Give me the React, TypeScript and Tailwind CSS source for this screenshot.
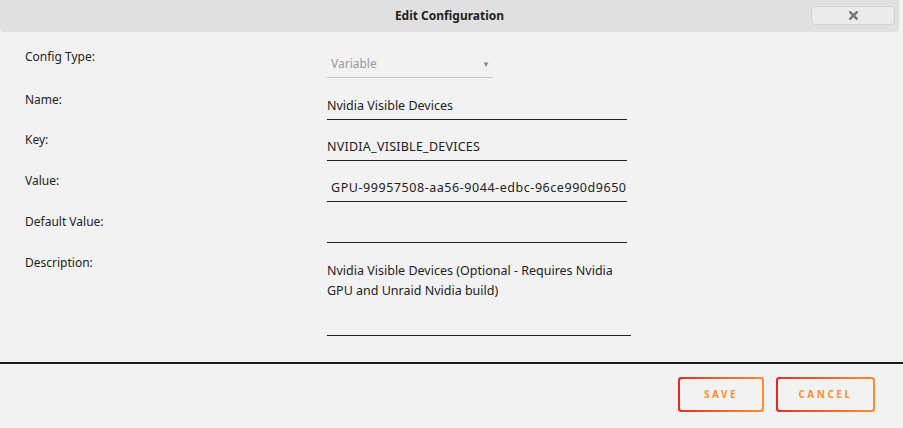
import React from "react";

const font = { fontFamily: '"Noto Sans", "Open Sans", sans-serif' };

function Label({ children }: { children: React.ReactNode }) {
  return <div className="w-[302px] shrink-0 text-[12px] text-[#222]">{children}</div>;
}

function GradButton({ children, width }: { children: React.ReactNode; width: string }) {
  return (
    <div className={`${width} h-[35px] rounded-[3px] p-[2px] bg-gradient-to-r from-[#e22828] to-[#ff8d30]`}>
      <div className="w-full h-full rounded-[2px] bg-[#f2f2f2] flex items-center justify-center">
        <span className="text-[10px] font-bold tracking-[2.5px] text-[#ff8d30]">{children}</span>
      </div>
    </div>
  );
}

export default function App() {
  return (
    <div className="w-[903px] h-[428px] bg-[#f2f2f2] text-[#222] flex flex-col" style={font}>
      <div className="h-[32px] mr-[4px] bg-[#e0e0e0] rounded-b-[4px] relative flex items-center justify-center">
        <span className="text-[12px] font-bold text-[#222]">Edit Configuration</span>
        <div className="absolute right-[4px] top-[6px] w-[84px] h-[19px] rounded-[4px] border border-[#d2d2d2] bg-[#ebebeb] flex items-center justify-center">
          <svg width="9" height="9" viewBox="0 0 10 10">
            <path d="M1.5 1.5 L8.5 8.5 M8.5 1.5 L1.5 8.5" stroke="#777" strokeWidth="2.8" strokeLinecap="square" />
          </svg>
        </div>
      </div>

      <div className="flex flex-col pl-[25px] pt-[16px]">
        <div className="flex h-[41px]">
          <Label>Config Type:</Label>
          <div className="w-[166px] h-[30px] border-b border-[#c8c8c8] flex items-center justify-between pt-[2px] pl-[4px] pr-[3px] text-[12px] text-[#999]">
            <span>Variable</span>
            <span className="text-[8px] text-[#888]">▼</span>
          </div>
        </div>
        <div className="flex h-[42px] pt-[2px]">
          <Label>Name:</Label>
          <div className="w-[300px] h-[29px] border-b border-[#222] flex items-end pb-[3px] text-[12.5px]">Nvidia Visible Devices</div>
        </div>
        <div className="flex h-[41px]">
          <Label>Key:</Label>
          <div className="w-[300px] h-[30px] border-b border-[#222] flex items-end pb-[3px] text-[12.5px] tracking-[0.25px]">NVIDIA_VISIBLE_DEVICES</div>
        </div>
        <div className="flex h-[41px]">
          <Label>Value:</Label>
          <div className="w-[300px] h-[30px] border-b border-[#222] flex items-end pb-[3px] pl-[4px] text-[12.5px] tracking-[0.55px] whitespace-nowrap">GPU-99957508-aa56-9044-edbc-96ce990d9650</div>
        </div>
        <div className="flex h-[41px]">
          <Label>Default Value:</Label>
          <div className="w-[300px] h-[30px] border-b border-[#222]"></div>
        </div>
        <div className="flex">
          <Label>Description:</Label>
          <div className="w-[304px] h-[82px] border-b border-[#222] pt-[7px] text-[12.5px] leading-[20px]">
            Nvidia Visible Devices (Optional - Requires Nvidia
            <br />
            GPU and Unraid Nvidia build)
          </div>
        </div>
      </div>

      <div className="mt-[26px] h-[2px] bg-[#1c1c1c]"></div>

      <div className="flex justify-end gap-[12px] pr-[28px] pt-[13px]">
        <GradButton width="w-[86px]">SAVE</GradButton>
        <GradButton width="w-[99px]">CANCEL</GradButton>
      </div>
    </div>
  );
}
